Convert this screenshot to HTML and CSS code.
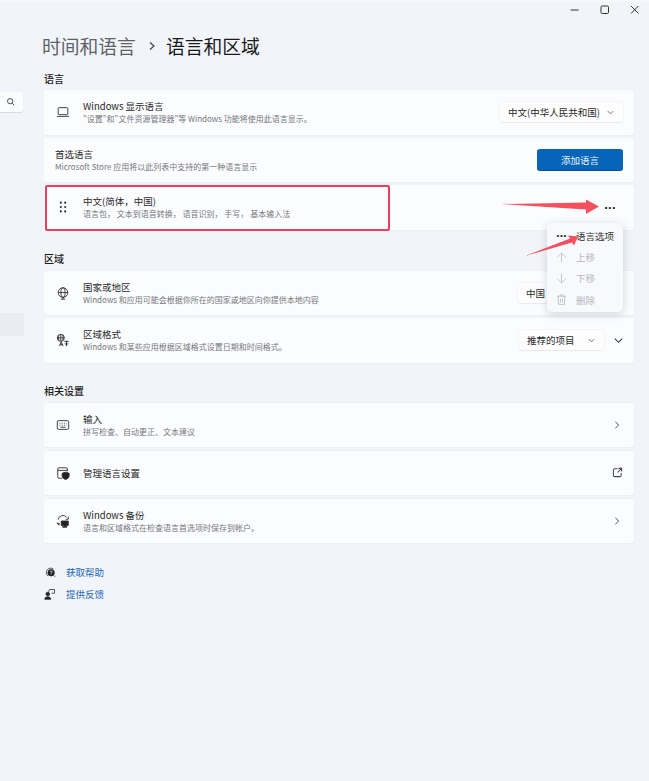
FILE: index.html
```html
<!DOCTYPE html>
<html lang="zh-CN">
<head>
<meta charset="utf-8">
<title>语言和区域</title>
<link rel="stylesheet" href="styles.css">
</head>
<body>
<div class="window">
  <div class="caption">
    <svg class="cap-icon" viewBox="0 0 12 12"><path d="M1.5 6h8"/></svg>
    <svg class="cap-icon" viewBox="0 0 12 12"><rect x="2" y="2" width="7.5" height="7.5" rx="1.2"/></svg>
    <svg class="cap-icon" viewBox="0 0 12 12"><path d="M2 2l7.5 7.5M9.5 2L2 9.5"/></svg>
  </div>
  <div class="shell">
    <aside class="sidebar">
      <div class="search">
        <svg viewBox="0 0 12 12"><circle cx="5" cy="5" r="3.2"/><path d="M7.4 7.4L10 10"/></svg>
      </div>
      <div class="nav-selected"></div>
    </aside>
    <main class="content">
      <h1 class="breadcrumb"><span class="crumb-parent">时间和语言</span><svg class="crumb-sep" viewBox="0 0 10 10"><path d="M3 1.5L7 5L3 8.5"/></svg><span class="crumb-current">语言和区域</span></h1>

      <h2 class="section-label first">语言</h2>
      <div class="stack">
        <div class="card">
          <svg class="row-icon" viewBox="0 0 16 16"><rect x="2.5" y="3" width="11" height="8" rx="1"/><path d="M1 13h14"/></svg>
          <div class="row-text"><div class="row-title">Windows 显示语言</div><div class="row-sub">"设置"和"文件资源管理器"等 Windows 功能将使用此语言显示。</div></div>
          <div class="select select-lang"><span>中文(中华人民共和国)</span><svg class="chev-sm" viewBox="0 0 10 10"><path d="M2 3.5L5 6.5L8 3.5"/></svg></div>
        </div>
        <div class="card card-plain">
          <div class="row-text"><div class="row-title">首选语言</div><div class="row-sub">Microsoft Store 应用将以此列表中支持的第一种语言显示</div></div>
          <button class="primary">添加语言</button>
        </div>
        <div class="card">
          <svg class="row-icon grip" viewBox="0 0 16 16"><circle cx="5.5" cy="3" r="1.15"/><circle cx="10.5" cy="3" r="1.15"/><circle cx="5.5" cy="8" r="1.15"/><circle cx="10.5" cy="8" r="1.15"/><circle cx="5.5" cy="13" r="1.15"/><circle cx="10.5" cy="13" r="1.15"/></svg>
          <div class="row-text"><div class="row-title">中文(简体，中国)</div><div class="row-sub">语言包， 文本到语音转换， 语音识别， 手写， 基本输入法</div></div>
          <div class="dots">···</div>
        </div>
      </div>

      <h2 class="section-label">区域</h2>
      <div class="stack">
        <div class="card">
          <svg class="row-icon" viewBox="0 0 16 16"><circle cx="8" cy="7.5" r="5.5"/><ellipse cx="8" cy="7.5" rx="2.4" ry="5.5"/><path d="M2.5 7.5h11M8 13v2M5.5 15h5"/></svg>
          <div class="row-text"><div class="row-title">国家或地区</div><div class="row-sub">Windows 和应用可能会根据你所在的国家或地区向你提供本地内容</div></div>
          <div class="select select-country"><span>中国</span></div>
        </div>
        <div class="card">
          <svg class="row-icon" viewBox="0 0 16 16"><circle cx="5.5" cy="5.5" r="4"/><path d="M1.5 5.5h8M5.5 1.5v8M3.5 2.5c-1 2-1 4 0 6M7.5 2.5c1 2 1 4 0 6"/><path class="thick" d="M4 15l2-5 2 5M4.8 13.4h2.4M9.5 9.5h5M12 9.5v5.5M10 12c1 1 3 1 4 0"/></svg>
          <div class="row-text"><div class="row-title">区域格式</div><div class="row-sub">Windows 和某些应用根据区域格式设置日期和时间格式。</div></div>
          <div class="select select-format"><span>推荐的项目</span><svg class="chev-sm" viewBox="0 0 10 10"><path d="M2 3.5L5 6.5L8 3.5"/></svg></div>
          <svg class="chev-lg" viewBox="0 0 12 12"><path d="M2 4l4 4 4-4"/></svg>
        </div>
      </div>

      <h2 class="section-label related">相关设置</h2>
      <div class="stack stack-wide">
        <div class="card">
          <svg class="row-icon" viewBox="0 0 16 16"><rect x="1.5" y="3" width="13" height="10" rx="1.6"/><path d="M4 6h1M6.5 6h1M9 6h1M11.5 6h.5M4 8.2h1M6.5 8.2h1M9 8.2h1M11.5 8.2h.5M5 10.5h6"/></svg>
          <div class="row-text"><div class="row-title">输入</div><div class="row-sub">拼写检查、自动更正、文本建议</div></div>
          <svg class="chev-right" viewBox="0 0 12 12"><path d="M4 2l4 4-4 4"/></svg>
        </div>
        <div class="card">
          <svg class="row-icon" viewBox="0 0 16 16"><path d="M7 14H3.5A1.5 1.5 0 0 1 2 12.500V3.500A1.500 1.500 0 0 1 3.500 2h8A1.500 1.500 0 0 1 13 3.500V6M2 5h11"/><path class="solid" d="M11 7l4 1.300v3c0 2-2 3.400-4 4.200-2-.8-4-2.200-4-4.200v-3z"/></svg>
          <div class="row-text"><div class="row-title">管理语言设置</div></div>
          <svg class="chev-right ext" viewBox="0 0 12 12"><path d="M6 2H3a1.500 1.500 0 0 0-1.500 1.500v5.500A1.500 1.500 0 0 0 3 10.500h5.500A1.500 1.500 0 0 0 10 9V6.500M7 1.500h3.500V5M10.500 1.500L6 6"/></svg>
        </div>
        <div class="card">
          <svg class="row-icon" viewBox="0 0 16 16"><path d="M2.500 6.500A5.500 5.500 0 0 1 12 3.500M14 3v3h-3M1 10.500l2.500 2M1 10.500h2.500v2.500"/><path class="solid" d="M6 8h8v5H11v1.500h1.500v.5h-5v-.5H9V13H6z"/></svg>
          <div class="row-text"><div class="row-title">Windows 备份</div><div class="row-sub">语言和区域格式在检查语言首选项时保存到帐户。</div></div>
          <svg class="chev-right" viewBox="0 0 12 12"><path d="M4 2l4 4-4 4"/></svg>
        </div>
      </div>

      <div class="links">
        <a class="link"><svg viewBox="0 0 16 16"><path d="M5.500 13.300A5.500 5.500 0 1 1 12.500 4"/><circle class="solid" cx="9.500" cy="9" r="4.300"/><path class="knock" d="M8.200 7.800a1.300 1.300 0 1 1 1.800 1.300l-.5.5v.7M9.500 11.600v.4"/><path d="M13 12.500l2 2"/></svg><span>获取帮助</span></a>
        <a class="link"><svg viewBox="0 0 16 16"><circle class="solid" cx="5" cy="8" r="2.400"/><path class="solid" d="M1 15c0-2 1.500-3.300 4-3.300S9 13 9 15z"/><path d="M6.500 5V3.500A1.500 1.500 0 0 1 8 2h6v5h-4"/></svg><span>提供反馈</span></a>
      </div>
    </main>
  </div>

  <div class="menu">
    <div class="menu-item"><span class="menu-dots">···</span><span>语言选项</span></div>
    <div class="menu-item off"><svg viewBox="0 0 16 16"><path d="M8 14V2.500M2.500 8L8 2.500 13.500 8"/></svg><span>上移</span></div>
    <div class="menu-item off"><svg viewBox="0 0 16 16"><path d="M8 2v11.500M2.500 8L8 13.500 13.500 8"/></svg><span>下移</span></div>
    <div class="menu-item off"><svg viewBox="0 0 16 16"><path d="M2.500 4h11M6 4V2.500h4V4M3.800 4l.7 10h7l.7-10M6.800 7v4.500M9.200 7v4.500"/></svg><span>删除</span></div>
  </div>

  <div class="highlight"></div>
  <svg class="arrows" viewBox="0 0 649 781">
    <path d="M501 204L586 202.500V199.500L599 206.500L586 214V209.500Z"/>
    <path d="M525 256L570 238.500L568 235.500L578 236.500L574 245.500L572 242.500Z"/>
  </svg>
</div>
</body>
</html>
```
FILE: styles.css
```css
* { box-sizing: border-box; }
html, body { margin: 0; padding: 0; }
body {
  width: 649px;
  height: 781px;
  overflow: hidden;
  background: #fff;
  font-family: "Noto Sans CJK SC", "Noto Sans", sans-serif;
  color: #1c1c1c;
}
.window {
  position: relative;
  width: 649px;
  height: 781px;
  padding-top: 2px;
  border-top: 2px solid #f7f9fb;
  background: #f1f5fa;
}
.caption {
  display: flex;
  justify-content: flex-end;
  gap: 18px;
  height: 12px;
  padding: 0 8px 0 0;
}
.cap-icon {
  width: 12px;
  height: 12px;
  fill: none;
  stroke: #333;
  stroke-width: 1;
}
.shell { display: flex; }
.sidebar {
  width: 44px;
  flex: none;
}
.search {
  width: 23px;
  height: 20px;
  margin-top: 76px;
  display: flex;
  align-items: center;
  justify-content: flex-end;
  padding-right: 7px;
  background: #fbfcfe;
  border-radius: 0 3px 3px 0;
  box-shadow: 0 1px 1px rgba(0, 0, 0, .12);
}
.search svg { width: 10px; height: 10px; fill: none; stroke: #555; stroke-width: 1.200; }
.nav-selected {
  width: 24px;
  height: 23px;
  margin-top: 201px;
  background: #e9edf2;
  border-radius: 0 2px 2px 0;
}
.content {
  width: 590px;
  flex: none;
}
.breadcrumb {
  display: flex;
  align-items: center;
  margin: 15px 0 0 -2px;
  height: 30px;
  font-size: 18.800px;
  line-height: 30px;
  font-weight: 400;
}
.crumb-parent { color: #5f6368; }
.crumb-sep {
  width: 10px;
  height: 10px;
  margin: 0 9px 0 11px;
  fill: none;
  stroke: #444;
  stroke-width: 1.200;
}
.crumb-current { color: #1a1a1a; }
.section-label {
  margin: 22px 0 6px;
  height: 13px;
  font-size: 10px;
  line-height: 13px;
  font-weight: 500;
  color: #1c1c1c;
}
.section-label.first { margin-top: 10.500px; margin-bottom: 5.500px; }
.section-label.related { margin-top: 21.500px; margin-bottom: 5.500px; }
.stack {
  display: flex;
  flex-direction: column;
  gap: 3px;
}
.stack-wide { gap: 3.500px; }
.card {
  position: relative;
  display: flex;
  align-items: center;
  height: 44.500px;
  padding: 0 11px 0 12px;
  background: #fbfcfe;
  border-radius: 3px;
  box-shadow: 0 0 0 .5px #edf0f4, 0 1px 0 #eaeef3;
}
.card-plain { padding-left: 11px; }
.row-icon {
  width: 14px;
  height: 14px;
  flex: none;
  margin-right: 13px;
  fill: none;
  stroke: #2b2b2b;
  stroke-width: 1;
}
.row-icon .solid, .link .solid { fill: #222; }
.row-icon .thick { stroke-width: 1.100; }
.grip { fill: #222; stroke: none; }
.row-text { flex: 1; min-width: 0; padding-top: 1px; }
.row-title {
  font-size: 9.500px;
  line-height: 13px;
  color: #2a2a2a;
  white-space: nowrap;
}
.row-sub {
  font-size: 8px;
  line-height: 12px;
  color: #75777b;
  white-space: nowrap;
}
.select {
  display: flex;
  align-items: center;
  justify-content: space-between;
  height: 20px;
  padding: 0 8px;
  font-size: 9.500px;
  color: #2a2a2a;
  background: #fdfdfe;
  border-radius: 3px;
  box-shadow: 0 0 0 .5px #eceef1, 0 1px 1px rgba(0, 0, 0, .08);
}
.select-lang { width: 123px; }
.select-country { width: 52px; margin-right: 53px; }
.select-format { width: 85px; margin-right: 9px; }
.chev-sm { width: 9px; height: 9px; fill: none; stroke: #666; stroke-width: 1; }
.chev-lg { width: 11px; height: 11px; flex: none; margin-right: -1px; fill: none; stroke: #333; stroke-width: 1.100; }
.chev-right { width: 10px; height: 10px; flex: none; margin-right: 1px; fill: none; stroke: #444; stroke-width: 1.100; }
.chev-right.ext { width: 11px; height: 11px; margin-right: 0; }
.primary {
  width: 86px;
  height: 21px;
  border: 0;
  padding: 0;
  font: inherit;
  font-size: 9.500px;
  color: #e8f2fb;
  background: #0564b8;
  border-radius: 3px;
  box-shadow: 0 1px 0 #04508f;
}
.dots {
  width: 20px;
  margin-right: 3px;
  text-align: center;
  font-family: "Liberation Sans", sans-serif;
  font-size: 13px;
  font-weight: 700;
  line-height: 13px;
  letter-spacing: -.5px;
  color: #1c1c1c;
}
.links {
  display: flex;
  flex-direction: column;
  gap: 8px;
  margin-top: 22px;
}
.link {
  display: flex;
  align-items: center;
  gap: 10px;
  height: 14px;
  font-size: 9.500px;
  color: #1f66b5;
}
.link svg { width: 12px; height: 12px; fill: none; stroke: #222; stroke-width: 1; }
.link .knock { stroke: #f1f5fa; }
.menu {
  position: absolute;
  left: 547px;
  top: 221px;
  width: 76px;
  height: 89px;
  padding-top: 2.500px;
  display: flex;
  flex-direction: column;
  background: #f7f9fc;
  border-radius: 5px;
  box-shadow: 0 2px 8px rgba(60, 70, 90, .22);
}
.menu-item {
  display: flex;
  align-items: center;
  gap: 8px;
  height: 21.200px;
  padding-left: 8px;
  font-size: 9.500px;
  color: #333;
}
.menu-item svg { width: 13px; height: 13px; flex: none; fill: none; stroke: #b2b5b9; stroke-width: .9; }
.menu-item.off { color: #b6b8bb; }
.menu-dots {
  width: 13px;
  flex: none;
  text-align: center;
  font-family: "Liberation Sans", sans-serif;
  font-size: 12px;
  font-weight: 700;
  letter-spacing: -.5px;
  color: #222;
}
.highlight {
  position: absolute;
  left: 45px;
  top: 183px;
  width: 345px;
  height: 46px;
  border: 2px solid #e8405e;
  border-radius: 2px;
}
.arrows {
  position: absolute;
  left: 0;
  top: -2px;
  width: 649px;
  height: 781px;
  fill: #f4505f;
  pointer-events: none;
}
```
